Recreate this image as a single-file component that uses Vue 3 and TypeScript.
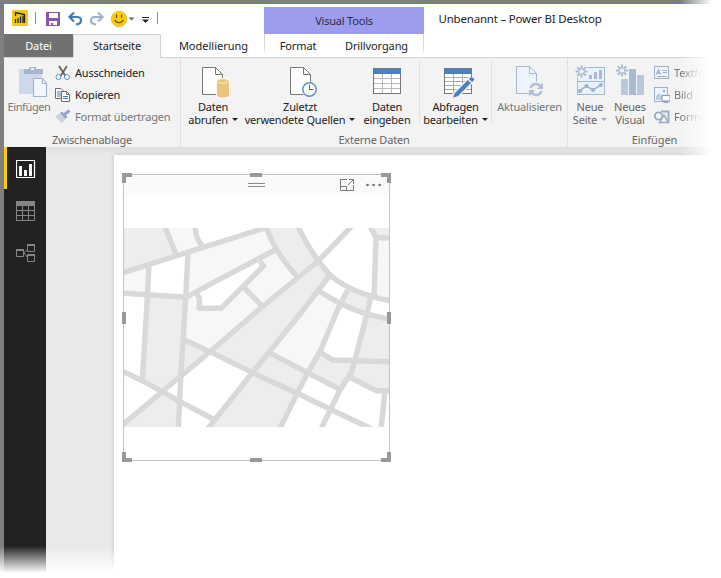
<script setup lang="ts">
interface View { id: string; active: boolean }
const views: View[] = [
  { id: 'report', active: true },
  { id: 'data', active: false },
  { id: 'model', active: false },
]

const darkBlocks: string[] = [
  '124,228 165,228 176,254 124,272',
  '267,228 298,228 307,245 318,261 297,276 277,250',
  '371,228 389,228 389,238 376,237',
  '147,295 186,297 181,373 162,392 142,381',
  '185,340 210,352 182,374',
  '318,261 330,275 253,372 210,352',
  '347,290 370,297 367,313 339,305',
  '124,424 162,392 180,402 178,427 124,427',
  '253,372 297,394 281,427 209,427',
  '270,353 307,373 297,394 253,372',
  '320,352 333,360 355,361 350,377 340,390 307,373',
  '363,314 389,319 389,362 354,361',
  '354,361 389,362 389,391 376,391 350,377',
]
const lightBlocks: string[] = [
  '165,228 195,228 202,246 176,254',
  '188,252 268,227 277,250 187,297',
  '124,272 149,265 148,295 124,293',
  '186,297 199,298 199,308 221,308 244,288 261,305 210,352 185,340',
  '244,288 263,266 260,262 277,250 297,276 261,306',
  '376,238 389,238 389,300 374,297',
  '301,312 320,293 338,303 337,310 320,352 307,373 270,353',
]
const roads: string[] = [
  'M120 273.6L268 227',
  'M164.500 226L176 254',
  'M195 226Q195.500 240 203 246',
  'M188 252L185.700 298L181 373L178.200 430',
  'M149 265L146.300 315L142.300 381',
  'M120 293L187 297.300',
  'M186 297.500L215 281.700L277 249',
  'M196 294Q199.500 296 199.500 300L199 308.300H221L263.500 266L260 261.500',
  'M244.300 287.700L261 305',
  'M120 427L161.700 392L210 351.700L262 307L318.300 261L352 226',
  'M266 226Q273 250 297 276.500',
  'M297.500 226Q313 257 330 275Q352 294 392 301',
  'M330 275L300 314L252.500 372.500L207.500 429',
  'M319 291Q340 305 366 314L392 320',
  'M347.500 290L338 309L320 351.700L307.300 373.300L279 430',
  'M370.800 297L367.300 313.300L351.700 371.700L340 390L320.500 430',
  'M370 226L376 237.500L392 238.300M376 237L374 297',
  'M320 352L332.700 360L392 361.900',
  'M350 377.300L376 390.700H392M385 391L381 430',
  'M269 352.700L307 372.300L340 389.500',
  'M184 339.600L210 351.700L252.300 372.700L297.300 393.300L331.700 410L372 429',
  'M120 370L142.300 380.700L180 401.700L214 419.500',
]
const starAngles: number[] = [0, 45, 90, 135, 180, 225, 270, 315]
</script>

<template>
  <div class="window">
    <header class="titlebar">
      <svg class="quick" width="166" height="30" viewBox="4 4 166 30">
        <rect x="12" y="10" width="16" height="16" fill="#f2c811" />
        <path d="M15.500 16V12.500L24.500 14.500V23M15.500 19V23M18 18V23M20.500 16.500V23M23 15.500V23" fill="none" stroke="#222" stroke-width="1.300" />
        <path d="M35.500 12V24M157.500 12V24" stroke="#8c8c8c" />
        <path d="M46 12H60V26H46Z" fill="#8a56ac" />
        <path d="M49 13H58V18H49ZM49 21H57V25H53V23H51V25H49Z" fill="#fff" />
        <path d="M74 12.500L69.500 17L74 21.500M70 17H77Q81 17 81 20.500Q81 24 76 24.500" fill="none" stroke="#3f7db8" stroke-width="2.200" />
        <path d="M98 12.500L102.500 17L98 21.500M102 17H95Q91 17 91 20.500Q91 24 96 24.500" fill="none" stroke="#9fb3cf" stroke-width="2.200" />
        <circle cx="119" cy="19" r="7.700" fill="#fc0" stroke="#eab20c" stroke-width=".7" />
        <path d="M116.500 14.500V18M121.500 14.500V18M114.500 20Q119 25.500 123.500 20" fill="none" stroke="#6b5310" stroke-width="1.200" />
        <path d="M128.500 17.500H134.500L131.500 20.500Z" fill="#666" />
        <path d="M142 17.500H149" stroke="#222" /><path d="M142 19.500H149L145.500 23Z" fill="#222" />
      </svg>
      <div class="context">Visual Tools</div>
      <div class="title">Unbenannt – Power BI Desktop</div>
    </header>

    <nav class="tabs">
      <div class="tab file"><span>Datei</span></div>
      <div class="tab active"><span>Startseite</span></div>
      <div class="tab modeling"><span>Modellierung</span></div>
      <div class="tabgroup">
        <div class="tab format"><span>Format</span></div>
        <div class="tab drill"><span>Drillvorgang</span></div>
      </div>
    </nav>

    <section class="ribbon">
      <div class="group clipboard">
        <div class="tools">
          <div class="button paste off">
            <svg width="44" height="36" viewBox="0 0 44 36">
              <rect x="12" y="5" width="23" height="25" fill="#cdd8e9" />
              <path d="M17 5H22V3H29V5H36V10H17Z" fill="#a6b5cd" /><rect x="24" y="4" width="3" height="2" fill="#f3f3f3" />
              <path d="M26.500 14.500H35.500L39.500 19.500V32.500H26.500Z" fill="#f2f7fe" stroke="#a4b3cc" stroke-width="1.200" />
              <path d="M35.500 14.500V19.500H39.500" fill="none" stroke="#a4b3cc" />
            </svg>
            <span class="tight">Einfügen</span>
          </div>
          <div class="small">
            <div class="row">
              <svg width="16" height="16" viewBox="0 0 16 16">
                <path d="M4 1L10.500 11M12 1L5.500 11" stroke="#666" stroke-width="1.800" />
                <circle cx="3.500" cy="12" r="2.500" fill="#f7fbff" stroke="#5b8fc5" /><circle cx="12" cy="12" r="2.500" fill="#f7fbff" stroke="#5b8fc5" />
              </svg><span>Ausschneiden</span>
            </div>
            <div class="row">
              <svg width="16" height="16" viewBox="0 0 16 16">
                <path d="M.5 1.500H6L8.500 4V11.500H.5Z" fill="#fff" stroke="#6d6d6d" /><path d="M2 5H6M2 7H6M2 9H6" stroke="#3c7cc0" />
                <path d="M6.500 4.500H11.500L14.500 7.500V14.500H6.500Z" fill="#fff" stroke="#6d6d6d" /><path d="M11.500 4.500V7.500H14" fill="none" stroke="#6d6d6d" /><path d="M8 9.500H13M8 11.500H13" stroke="#3c7cc0" />
              </svg><span>Kopieren</span>
            </div>
            <div class="row off">
              <svg width="16" height="16" viewBox="0 0 16 16">
                <path d="M0 7.500L5 4L10.500 10L7 14.500Z" fill="#c8d3e5" /><path d="M5 4L7 2.500L12.500 8L10.500 10Z" fill="#93a6c4" /><path d="M9.500 5.500L14.500 1.500" stroke="#93a6c4" stroke-width="3" />
              </svg><span>Format übertragen</span>
            </div>
          </div>
        </div>
        <div class="caption"><span>Zwischenablage</span></div>
      </div>

      <div class="group external">
        <div class="tools">
          <div class="button b64">
            <svg width="44" height="36" viewBox="0 0 44 36">
              <path d="M11.500 3.500H24.500L31.500 10.500V30.500H11.500Z" fill="#fff" stroke="#777" /><path d="M24.500 3.500V10.500H31.500" fill="none" stroke="#777" />
              <path d="M25 14H39V34H25Z" fill="#f8f8f8" /><path d="M26 17V31Q26 33.500 32 33.500T38 31V17Z" fill="#ecc57a" /><ellipse cx="32" cy="17" rx="6" ry="2.200" fill="#ecc57a" stroke="#fff6df" stroke-width=".8" />
            </svg>
            <span>Daten</span><span>abrufen<i class="caret"></i></span>
          </div>
          <div class="button b110">
            <svg width="44" height="36" viewBox="0 0 44 36">
              <path d="M12.500 3.500H25.500L32.500 10.500V30.500H12.500Z" fill="#fff" stroke="#777" /><path d="M25.500 3.500V10.500H32.500" fill="none" stroke="#777" />
              <circle cx="31.500" cy="25.500" r="8" fill="#f3f3f3" /><circle cx="31.500" cy="25.500" r="6.700" fill="#fbfdff" stroke="#5b91c9" stroke-width="1.400" /><path d="M31.500 20.500V25.500H35.500" fill="none" stroke="#666" />
            </svg>
            <span>Zuletzt</span><span>verwendete Quellen<i class="caret"></i></span>
          </div>
          <div class="button b64">
            <svg width="44" height="36" viewBox="0 0 44 36">
              <rect x="8.500" y="4.500" width="27" height="25" fill="#fff" /><path d="M9 14.500H35M9 19.500H35M9 24.500H35M17.500 10V29M26.500 10V29" stroke="#b9b9b9" />
              <rect x="8.500" y="4.500" width="27" height="25" fill="none" stroke="#777" /><rect x="8" y="5" width="28" height="5" fill="#4a80bc" />
            </svg>
            <span>Daten</span><span>eingeben</span>
          </div>
          <div class="rule"></div>
          <div class="button b71">
            <svg width="44" height="36" viewBox="0 0 44 36">
              <rect x="10.500" y="4.500" width="27" height="25" fill="#fff" /><path d="M11 13.500H37M11 17.500H37M11 21.500H37M11 25.500H37M19.500 10V29M28.500 10V29" stroke="#a9a9a9" />
              <rect x="10.500" y="4.500" width="27" height="25" fill="none" stroke="#777" /><rect x="10" y="5" width="28" height="5" fill="#4a80bc" />
              <path d="M20 33L39 14" stroke="#f3f3f3" stroke-width="7" /><path d="M22.500 30.500L35.500 17.500M36.500 16.500L39 14" stroke="#4a80bc" stroke-width="4.300" /><path d="M19 33.500L21 28.500L24.500 32Z" fill="#4a80bc" />
            </svg>
            <span>Abfragen</span><span>bearbeiten<i class="caret"></i></span>
          </div>
          <div class="rule"></div>
          <div class="button b75 off">
            <svg width="44" height="36" viewBox="0 0 44 36">
              <path d="M8.500 2.500H21.500L28.500 9.500V29.500H8.500Z" fill="#eef4fd" stroke="#a9b8d0" /><path d="M21.500 2.500V9.500H28.500" fill="none" stroke="#a9b8d0" />
              <circle cx="28" cy="25.500" r="8" fill="#f3f3f3" /><path d="M22.500 24Q24 20 28 20Q31 20 33 22.500M33.500 27Q32 31 28 31Q25 31 23 28.500" fill="none" stroke="#b0bfd7" stroke-width="2.400" />
              <path d="M35 18.500V25H29ZM21 32.500V26H27Z" fill="#b0bfd7" />
            </svg>
            <span>Aktualisieren</span>
          </div>
        </div>
        <div class="caption"><span>Externe Daten</span></div>
      </div>

      <div class="group insert">
        <div class="tools">
          <div class="button b44 off dark">
            <svg width="44" height="36" viewBox="0 0 44 36">
              <rect x="9.500" y="3.500" width="27" height="27" fill="#e9f2fc" stroke="#a4b7d3" /><path d="M9 17.500H37" stroke="#a4b7d3" />
              <path d="M21 11H24V15H21ZM26 8H29V15H26ZM31 6H34V15H31Z" fill="#a9bad5" />
              <path d="M12 27L18 22L25 26L33 21" fill="none" stroke="#9db0cd" stroke-width="1.500" /><circle cx="12" cy="27" r="2" fill="#9db0cd" /><circle cx="18.500" cy="22" r="2" fill="#9db0cd" /><circle cx="25" cy="26" r="2" fill="#9db0cd" /><circle cx="33" cy="21" r="2" fill="#9db0cd" />
              <circle cx="13.500" cy="7.500" r="7" fill="#f3f3f3" />
              <path v-for="a in starAngles" :key="a" d="M16 7.500H19.500" :transform="`rotate(${a} 13.500 7.500)`" stroke="#a9bad5" stroke-width="2" /><circle cx="13.500" cy="7.500" r="2.700" fill="#f3f3f3" stroke="#a9bad5" />
            </svg>
            <span>Neue</span><span>Seite<i class="caret pale"></i></span>
          </div>
          <div class="button b36 off dark">
            <svg width="44" height="36" viewBox="0 0 44 36">
              <path d="M13 15H20V31H13ZM29 11H36V31H29Z" fill="#bac8df" /><path d="M21 5H28V31H21Z" fill="#a9bad7" />
              <circle cx="14" cy="6.500" r="6.500" fill="#f3f3f3" />
              <path v-for="a in starAngles" :key="a" d="M16.500 6.500H20" :transform="`rotate(${a} 14 6.500)`" stroke="#a9bad5" stroke-width="2" /><circle cx="14" cy="6.500" r="2.700" fill="#f3f3f3" stroke="#a9bad5" />
            </svg>
            <span>Neues</span><span>Visual</span>
          </div>
          <div class="small objects">
            <div class="row off">
              <svg width="16" height="16" viewBox="0 0 16 16">
                <rect x=".5" y="1.500" width="14" height="12" fill="#edf4fd" stroke="#a0b1ce" /><path d="M2.500 9.500L4.500 4.500L6.500 9.500M3 8H6" fill="none" stroke="#8098c0" /><path d="M8.500 5.500H13M8.500 7.500H13M3 11.500H13" stroke="#a0b1ce" />
              </svg><span>Textfeld</span>
            </div>
            <div class="row off">
              <svg width="16" height="16" viewBox="0 0 16 16">
                <rect x=".5" y=".5" width="13" height="14" fill="#edf4fd" stroke="#a0b1ce" /><circle cx="10" cy="4" r="1.300" fill="#a0b1ce" /><path d="M2 13V9L5 6L8 9V13Z" fill="#c0cde2" />
                <rect x="8" y="8.500" width="8" height="5.500" fill="#fff" stroke="#8ea3c5" stroke-width="1.200" /><path d="M12 14V15.500M9.500 15.500H14.500" stroke="#8ea3c5" />
              </svg><span>Bild</span>
            </div>
            <div class="row off">
              <svg width="16" height="16" viewBox="0 0 16 16">
                <path d="M7 2.500H14.500V12H10" fill="none" stroke="#9aadce" stroke-width="2" /><circle cx="4.500" cy="7" r="3.700" fill="none" stroke="#9aadce" stroke-width="1.800" /><path d="M10 6L14.500 13.500H5.500Z" fill="#f3f3f3" stroke="#9aadce" stroke-width="1.500" />
              </svg><span>Formen</span>
            </div>
          </div>
        </div>
        <div class="caption dark"><span class="plain">Einfügen</span></div>
      </div>
    </section>

    <main class="workspace">
      <aside class="views">
        <div v-for="v in views" :key="v.id" class="view" :class="{ current: v.active }">
          <svg v-if="v.id === 'report'" width="20" height="20" viewBox="0 0 20 20">
            <path d="M.5 1.500H18.500V18.500H.5Z" fill="none" stroke="#fff" stroke-width="1.200" /><path d="M3 7H6V17H3ZM8 11H11V17H8ZM13 5H16V17H13Z" fill="#f3f3f3" />
          </svg>
          <svg v-else-if="v.id === 'data'" width="20" height="20" viewBox="0 0 20 20">
            <path d="M0 0H19V5H0Z" fill="#858585" /><path d="M.5 4V19.500H18.500V4M0 9.500H19M0 14.500H19M6.500 5V19M12.500 5V19" fill="none" stroke="#858585" />
          </svg>
          <svg v-else width="20" height="20" viewBox="0 0 20 20">
            <path d="M.5 7H7.500V13.500H.5ZM11.500 2H18.500V8.500H11.500ZM11.500 12H18.500V18.500H11.500Z" fill="none" stroke="#858585" /><path d="M0 7H8M11 2H19M11 12H19" stroke="#858585" stroke-width="2" /><path d="M8 10L11 6.500M8 10L11 14" stroke="#858585" />
          </svg>
        </div>
      </aside>
      <div class="canvas">
        <div class="page">
          <article class="visual">
            <div class="visual-head">
              <svg width="265" height="20" viewBox="124 175 265 20">
                <path d="M248 183.500H265M248 186.500H265" stroke="#8a8a8a" />
                <path d="M347 179.500H340.500V190.500H353.500V185" fill="none" stroke="#777" /><path d="M340 186.500H346.500V190M348 185L353.500 179.500M349 179.500H353.500V184" fill="none" stroke="#777" />
                <g fill="#6e6e6e"><circle cx="367.500" cy="185" r="1.300" /><circle cx="373.600" cy="185" r="1.300" /><circle cx="379.700" cy="185" r="1.300" /></g>
              </svg>
            </div>
            <svg class="map" width="265" height="199" viewBox="124 228 265 199">
              <polygon v-for="p in lightBlocks" :key="p" :points="p" fill="#f7f7f7" />
              <polygon v-for="p in darkBlocks" :key="p" :points="p" fill="#ededed" />
              <path v-for="r in roads" :key="r" :d="r" fill="none" stroke="#d9d9d9" stroke-width="5.400" stroke-linejoin="round" />
            </svg>
            <svg class="handles" width="269" height="289" viewBox="0 0 269 289">
              <path d="M0 0H10V4H4V10H0ZM128 0H140V4H128ZM259 0H269V10H265V4H259ZM0 139H4V151H0ZM265 139H269V151H265ZM0 279H4V285H10V289H0ZM128 285H140V289H128ZM265 279H269V289H259V285H265Z" fill="#999" />
            </svg>
          </article>
        </div>
      </div>
    </main>
    <div class="fade-right"></div>
    <div class="fade-bottom"></div>
  </div>
</template>

<style>
body { margin: 0; background: #fff; overflow: hidden; }
</style>

<style scoped>
* { box-sizing: border-box; }
.window { position: relative; width: 721px; height: 578px; display: flex; flex-direction: column; border-top: 3px solid #7f7f7f; border-left: 3px solid #7f7f7f; background: #fff; font-family: "Noto Sans", "Open Sans", sans-serif; font-size: 11px; line-height: 13px; letter-spacing: -.2px; color: #222; white-space: nowrap; }
svg { display: block; flex: none; }
.titlebar { display: flex; height: 31px; flex: none; border-top: 1px solid #5b80bd; border-left: 1px solid #5b80bd; }
.context { width: 160px; height: 27px; margin: 3px 0 0 94px; background: #9d9def; text-align: center; line-height: 28px; color: #2b2b45; }
.title { margin-left: 14.500px; line-height: 30px; font-size: 11.500px; }
.tabs { display: flex; height: 24px; flex: none; border-left: 1px solid #5b80bd; border-bottom: 1px solid #d2d2d2; line-height: 23px; letter-spacing: -.1px; }
.tab { display: flex; justify-content: center; }
.file { width: 69px; background: #717171; color: #fff; }
.active { width: 88px; height: 24px; background: #f3f3f3; border: 1px solid #d2d2d2; border-bottom: 0; line-height: 22px; }
.modeling { width: 103px; padding-left: 2px; letter-spacing: 0; }
.tabgroup { display: flex; width: 160px; height: 18px; border: solid; border-width: 0 1px; border-image: linear-gradient(#ccc, #e8e8e8) 1; }
.format { width: 66px; }
.drill { width: 91px; }
.ribbon { display: flex; height: 89px; flex: none; background: #f3f3f3; border-left: 1px solid #5b80bd; }
.group { display: flex; flex-direction: column; flex: none; }
.tools { display: flex; height: 75px; padding-top: 6px; }
.clipboard { width: 177px; }
.external { width: 387px; }
.insert { width: 173px; }
.clipboard, .external { border-right: 1px solid #e1e1e1; }
.caption { display: flex; justify-content: center; color: #666; line-height: 14px; }
.button { display: flex; flex-direction: column; align-items: center; color: #222; flex: none; }
.button span { display: flex; align-items: center; height: 13px; }
.off { color: #777; }
.dark { color: #666; }
.button .tight { letter-spacing: -.4px; }
.plain { letter-spacing: -.05px; }
.paste { width: 50px; }
.b64 { width: 64px; } .b110 { width: 110px; } .b71 { width: 71px; } .b75 { width: 75px; } .b44 { width: 44px; } .b36 { width: 36px; }
.rule { width: 1px; height: 62px; margin-top: -2px; background: #e1e1e1; }
.caret { width: 0; height: 0; margin-left: 4px; border: 3px solid transparent; border-top: 3px solid currentColor; border-bottom: 0; }
.pale { color: #aaa; }
.small { display: flex; flex-direction: column; margin: -2px 0 0 1px; }
.row { display: flex; align-items: center; gap: 4px; height: 22px; }
.row span { padding-bottom: 2px; }
.objects { margin-left: 6px; }
.objects span { mask-image: linear-gradient(90deg, #000 10px, transparent 32px); }
.workspace { display: flex; flex: 1; border-left: 1px solid #5b80bd; background: #e9e9e9; }
.views { width: 42px; background: #222; }
.view { display: flex; height: 42px; padding: 12px 0 0 12px; }
.current { border-left: 3px solid #fc0; padding-left: 9px; }
.canvas { flex: 1; padding: 8px 0 0 68px; background: linear-gradient(#dedede, #e9e9e9 8px); }
.page { width: 607px; height: 423px; padding: 19px 0 0 9px; background: #fff; box-shadow: 0 0 5px #c4c4c4; }
.visual { position: relative; width: 267px; height: 287px; border: 1px solid #c4c4c4; }
.visual-head { height: 20px; background: #fafafa; }
.map { margin-top: 33px; }
.handles { position: absolute; left: -2px; top: -2px; }
.fade-right { position: absolute; top: -3px; right: 0; bottom: 0; width: 41px; background: linear-gradient(90deg, transparent, #fff 32px); }
.fade-bottom { position: absolute; left: -3px; right: 0; bottom: 0; height: 32px; background: linear-gradient(transparent, #fff 27px); }
</style>
